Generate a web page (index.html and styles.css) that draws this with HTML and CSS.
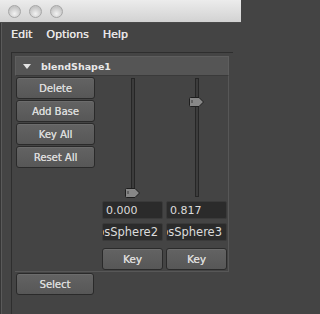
FILE: index.html
```html
<!DOCTYPE html>
<html>
<head>
<meta charset="utf-8">
<link rel="stylesheet" href="styles.css">
</head>
<body>
<div class="window">
  <div class="titlebar">
    <span class="light"></span><span class="light"></span><span class="light"></span>
  </div>
  <div class="menubar">
    <span class="menu">Edit</span><span class="menu">Options</span><span class="menu">Help</span>
  </div>
  <div class="frame">
    <div class="header">
      <span class="tri"></span><span class="htitle">blendShape1</span>
    </div>
    <div class="content">
      <div class="btncol">
        <div class="btn">Delete</div>
        <div class="btn">Add Base</div>
        <div class="btn">Key All</div>
        <div class="btn">Reset All</div>
      </div>
      <div class="slidercol">
        <div class="slider">
          <div class="track"></div>
          <svg class="handle" style="top:111px" width="15" height="10" viewBox="0 0 15 10"><path d="M1.5 0.5 H10 L14.5 5 L10 9.5 H1.5 Q0.5 9.5 0.5 8.5 V1.5 Q0.5 0.5 1.5 0.5 Z" fill="#878787" stroke="#1e1e1e"/><path d="M3 3 V6" stroke="#3a3a3a" stroke-width="1"/></svg>
        </div>
        <div class="field">0.000</div>
        <div class="field name"><span>bsSphere2</span></div>
        <div class="btn key">Key</div>
      </div>
      <div class="slidercol">
        <div class="slider">
          <div class="track"></div>
          <svg class="handle" style="top:20px" width="15" height="10" viewBox="0 0 15 10"><path d="M1.5 0.5 H10 L14.5 5 L10 9.5 H1.5 Q0.5 9.5 0.5 8.5 V1.5 Q0.5 0.5 1.5 0.5 Z" fill="#878787" stroke="#1e1e1e"/><path d="M3 3 V6" stroke="#3a3a3a" stroke-width="1"/></svg>
        </div>
        <div class="field">0.817</div>
        <div class="field name"><span>bsSphere3</span></div>
        <div class="btn key">Key</div>
      </div>
    </div>
    <div class="footer">
      <div class="btn select">Select</div>
    </div>
  </div>
</div>
</body>
</html>
```
FILE: styles.css
```css
html {
  background: #444444;
}
html, body {
  margin: 0;
  padding: 0;
}
body {
  width: 241px;
  height: 314px;
  overflow: hidden;
  background: #444444;
  font-family: "DejaVu Sans", "Liberation Sans", sans-serif;
  color: #d9d9d9;
}
.window {
  height: 314px;
  border-left: 1px solid #363636;
  box-shadow: inset 1px 0 0 #5a5a5a;
  box-sizing: border-box;
}
.titlebar {
  height: 22px;
  margin-left: -1px;
  background: linear-gradient(#ececec, #d2d2d2);
  border-bottom: 1px solid #4a4a4a;
  display: flex;
  align-items: center;
  padding-left: 8px;
  gap: 8px;
}
.light {
  width: 13px;
  height: 13px;
  border-radius: 50%;
  background: radial-gradient(circle at 50% 70%, #f2f2f2, #c4c4c4 70%);
  border: 1px solid #a6a6a6;
  box-sizing: border-box;
}
.menubar {
  height: 29px;
  display: flex;
  padding-left: 10px;
  padding-top: 5px;
  box-sizing: border-box;
  font-size: 11px;
  color: #e6e6e6;
  text-shadow: 0.3px 0 0 #e6e6e6;
}
.menu {
  margin-right: 14px;
}
.frame {
  margin-left: 10px;
  width: 222px;
  height: 262px;
  border-top: 1px solid #2e2e2e;
  border-left: 1px solid #2e2e2e;
  padding: 3px 0 0 3px;
  box-sizing: border-box;
}
.header {
  width: 214px;
  height: 20px;
  background: #555555;
  border: 1px solid #5e5e5e;
  border-bottom-color: #3a3a3a;
  box-sizing: border-box;
  display: flex;
  align-items: center;
  padding-left: 7px;
}
.tri {
  width: 0;
  height: 0;
  border-left: 4px solid transparent;
  border-right: 4px solid transparent;
  border-top: 5px solid #e4e4e4;
  margin-right: 10px;
}
.htitle {
  font-size: 9.5px;
  font-weight: bold;
  color: #e8e8e8;
}
.content {
  width: 214px;
  height: 196px;
  box-sizing: border-box;
  border-right: 1px solid #575757;
  border-bottom: 1px solid #575757;
  display: flex;
  padding: 1px 0 0 1px;
}
.btncol {
  width: 79px;
  display: flex;
  flex-direction: column;
  gap: 1px;
}
.btn {
  height: 22px;
  box-sizing: border-box;
  border: 1px solid #2a2a2a;
  border-radius: 3px;
  background: linear-gradient(#636363, #575757);
  box-shadow: inset 0 1px 0 #6c6c6c;
  font-size: 10px;
  color: #dadada;
  text-shadow: 0.2px 0 0 #dadada;
  display: flex;
  align-items: center;
  justify-content: center;
}
.slidercol {
  width: 61px;
  display: flex;
  flex-direction: column;
}
.btncol + .slidercol {
  margin-left: 7px;
}
.slidercol + .slidercol {
  margin-left: 3px;
}
.slider {
  position: relative;
  height: 121px;
}
.track {
  width: 4px;
  height: 119px;
  margin: 1px auto 0;
  box-sizing: border-box;
  background: #3c3c3c;
  border: 1px solid #262626;
}
.handle {
  position: absolute;
  left: 23px;
  display: block;
}
.field {
  height: 18px;
  box-sizing: border-box;
  background: #2b2b2b;
  border: 1px solid #3a3a3a;
  border-radius: 2px;
  font-size: 11px;
  color: #dcdcdc;
  display: flex;
  align-items: center;
  padding-left: 3px;
  margin-top: 3px;
  overflow: hidden;
  white-space: nowrap;
}
.field.name {
  margin-top: 4px;
  justify-content: flex-end;
  padding-left: 0;
  padding-right: 4px;
  font-size: 11.5px;
}
.field.name span {
  flex-shrink: 0;
}
.key {
  margin-top: 7px;
  font-size: 10.5px;
}
.footer {
  padding: 1px 0 0 1px;
}
.select {
  width: 78px;
}
```
